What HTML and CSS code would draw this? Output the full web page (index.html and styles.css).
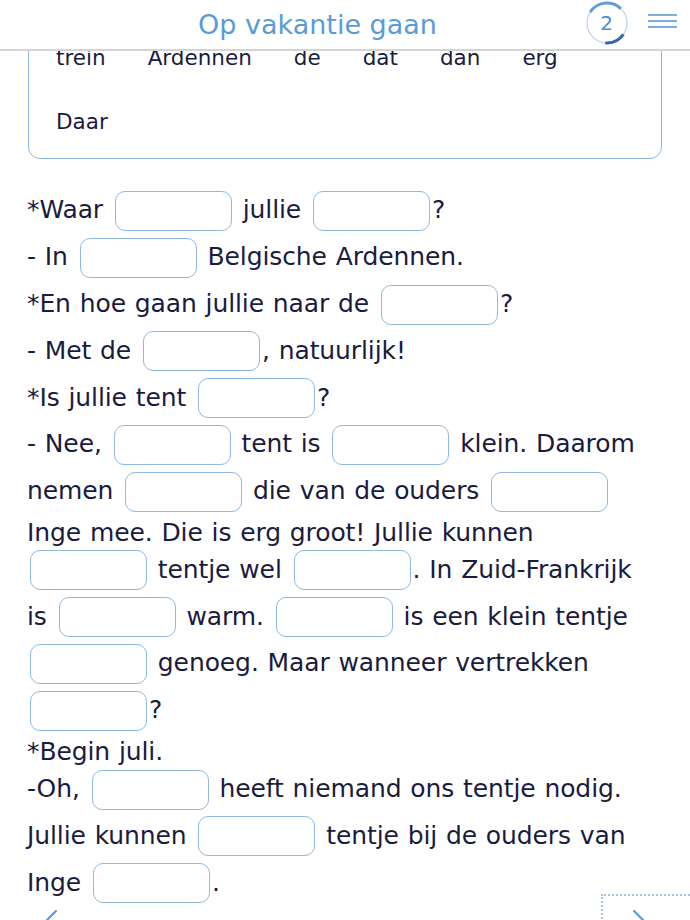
FILE: index.html
```html
<!DOCTYPE html>
<html lang="nl">
<head>
<meta charset="utf-8">
<title>Op vakantie gaan</title>
<link rel="stylesheet" href="styles.css">
</head>
<body>
<header class="topbar">
  <h1 class="title">Op vakantie gaan</h1>
  <div class="controls">
    <div class="counter">
      <svg class="counter-ring" viewBox="0 0 44 44" width="44" height="44" aria-hidden="true">
        <circle cx="22" cy="22" r="20" fill="none" stroke="#bcd2ea" stroke-width="1.2"/>
        <path d="M5.23 11.11 A20 20 0 0 1 35.89 7.61" fill="none" stroke="#5f9cd8" stroke-width="3"/>
        <path d="M38.38 33.47 A20 20 0 0 1 20.26 41.92" fill="none" stroke="#2f6aa6" stroke-width="3"/>
      </svg>
      <span class="counter-num">2</span>
    </div>
    <button class="menu" aria-label="Menu">
      <svg viewBox="0 0 29 14" width="29" height="14" aria-hidden="true">
        <line x1="0" y1="1" x2="29" y2="1" stroke="#6ea5dc" stroke-width="1.8"/>
        <line x1="0" y1="7" x2="29" y2="7" stroke="#6ea5dc" stroke-width="1.8"/>
        <line x1="0" y1="13" x2="29" y2="13" stroke="#6ea5dc" stroke-width="1.8"/>
      </svg>
    </button>
  </div>
</header>

<main class="content">
  <div class="word-bank">
    <span class="word">trein</span>
    <span class="word">Ardennen</span>
    <span class="word">de</span>
    <span class="word">dat</span>
    <span class="word">dan</span>
    <span class="word">erg</span>
    <span class="word">Daar</span>
  </div>

  <div class="exercise">
    <div class="turn">*Waar <span class="blank"></span> jullie <span class="blank"></span>?</div>
    <div class="turn">- In <span class="blank"></span> Belgische Ardennen.</div>
    <div class="turn">*En hoe gaan jullie naar de <span class="blank"></span>?</div>
    <div class="turn">- Met de <span class="blank"></span>, natuurlijk!</div>
    <div class="turn">*Is jullie tent <span class="blank"></span>?</div>
    <div class="turn">- Nee, <span class="blank"></span> tent is <span class="blank"></span> klein. Daarom nemen <span class="blank"></span> die van de ouders <span class="blank"></span> Inge mee. Die is erg groot! Jullie kunnen <span class="blank"></span> tentje wel <span class="blank"></span>. In Zuid-Frankrijk is <span class="blank"></span> warm. <span class="blank"></span> is een klein tentje <span class="blank"></span> genoeg. Maar wanneer vertrekken <span class="blank"></span>?</div>
    <div class="turn">*Begin juli.</div>
    <div class="turn">-Oh, <span class="blank"></span> heeft niemand ons tentje nodig. Jullie kunnen <span class="blank"></span> tentje bij de ouders van Inge <span class="blank"></span>.</div>
  </div>
</main>

<nav class="pager">
  <button class="pager-btn prev" aria-label="Vorige">
    <svg viewBox="0 0 89 72" width="89" height="72" aria-hidden="true">
      <polyline points="56,17 36,37 56,57" fill="none" stroke="#5e9bd6" stroke-width="2.2" stroke-linecap="round" stroke-linejoin="round"/>
    </svg>
  </button>
  <button class="pager-btn next" aria-label="Volgende">
    <svg viewBox="0 0 101 72" width="101" height="72" aria-hidden="true">
      <polyline points="33,17 53,37 33,57" fill="none" stroke="#5e9bd6" stroke-width="2.2" stroke-linecap="round" stroke-linejoin="round"/>
    </svg>
  </button>
</nav>
</body>
</html>
```

FILE: styles.css
```css
html, body {
  margin: 0;
  padding: 0;
  background: #ffffff;
}

body {
  font-family: "DejaVu Sans", Verdana, sans-serif;
  color: #1b1b40;
}

/* ---------- header ---------- */
.topbar {
  position: fixed;
  top: 0;
  left: 0;
  right: 0;
  height: 49px;
  background: #ffffff;
  border-bottom: 2px solid #d4d4d4;
  display: grid;
  z-index: 10;
}

.title,
.controls {
  grid-area: 1 / 1;
}

.title {
  margin: 0;
  padding-right: 55px;
  font-size: 27px;
  font-weight: normal;
  line-height: 49px;
  text-align: center;
  color: #5b9bd5;
}

.controls {
  justify-self: end;
  display: flex;
  align-items: flex-start;
  gap: 19.5px;
  padding-right: 13px;
}

.counter {
  display: grid;
  place-items: center;
  width: 44px;
  height: 44px;
  margin-top: 0.5px;
}

.counter > * {
  grid-area: 1 / 1;
}

.counter-ring {
  display: block;
}

.counter-num {
  font-size: 20px;
  line-height: 1;
  color: #4d8dcc;
}

.menu {
  display: block;
  width: 29px;
  height: 14px;
  margin-top: 14px;
  padding: 0;
  border: 0;
  background: none;
}

.menu svg {
  display: block;
}

/* ---------- content ---------- */
.content {
  padding: 20px 0 60px;
}

.word-bank {
  margin: 0 28px;
  border: 1.5px solid #8cb7e3;
  border-radius: 12px;
  padding: 16.5px 27px;
  display: flex;
  flex-wrap: wrap;
  column-gap: 42px;
  row-gap: 24px;
  font-size: 21.5px;
  line-height: 40px;
}

.exercise {
  margin-top: 30.4px;
  padding: 0 38px 0 27px;
  font-size: 25px;
  line-height: 32px;
  letter-spacing: -0.1px;
  word-spacing: 1px;
}

.blank {
  display: inline-block;
  box-sizing: border-box;
  width: 117px;
  height: 40px;
  margin: 1.6px 2px 5.2px 3px;
  border: 1.5px solid #8fb8e3;
  border-radius: 10px;
  background: #ffffff;
  vertical-align: -17.7px;
}

/* ---------- bottom navigation ---------- */
.pager {
  position: fixed;
  left: 0;
  right: 0;
  bottom: -46px;
  height: 72px;
  display: flex;
  justify-content: space-between;
  background: transparent;
}

.pager-btn {
  display: block;
  width: 89px;
  height: 72px;
  padding: 0;
  border: 0;
  background: transparent;
}

.pager-btn svg {
  display: block;
}

.pager-btn.next {
  width: 101px;
  margin-right: -12px;
  outline: 2px dotted #a7c2e2;
  outline-offset: -2px;
}
```
